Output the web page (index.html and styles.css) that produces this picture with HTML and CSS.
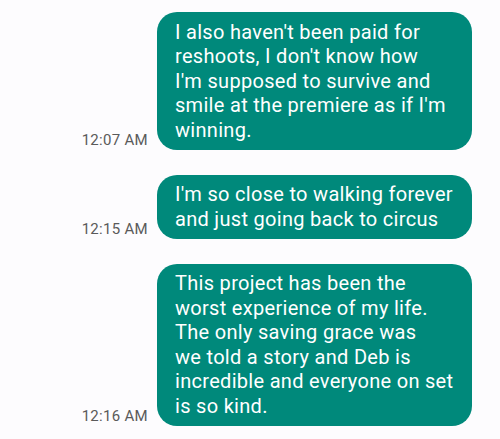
FILE: index.html
```html
<!DOCTYPE html>
<html>
<head>
<meta charset="utf-8">
<link rel="stylesheet" href="styles.css">
</head>
<body>
<div class="thread">
  <div class="row">
    <span class="time">12:07 AM</span>
    <div class="bubble">I also haven't been paid for<br>reshoots, I don't know how<br>I'm supposed to survive and<br>smile at the premiere as if I'm<br>winning.</div>
  </div>
  <div class="row">
    <span class="time">12:15 AM</span>
    <div class="bubble">I'm so close to walking forever<br>and just going back to circus</div>
  </div>
  <div class="row">
    <span class="time">12:16 AM</span>
    <div class="bubble">This project has been the<br>worst experience of my life.<br>The only saving grace was<br>we told a story and Deb is<br>incredible and everyone on set<br>is so kind.</div>
  </div>
</div>
</body>
</html>
```

FILE: styles.css
```css
html, body {
  margin: 0;
  padding: 0;
  background: #fdfcfe;
}
body {
  font-family: Roboto, "Noto Sans", sans-serif;
}
.thread {
  display: flex;
  flex-direction: column;
  gap: 25px;
  padding: 12px 28px 0 0;
}
.row {
  display: flex;
  justify-content: flex-end;
  align-items: flex-end;
  gap: 9px;
}
.time {
  font-size: 15px;
  letter-spacing: 0.3px;
  color: #5a5a5a;
  line-height: 1;
  padding-bottom: 1.5px;
}
.bubble {
  box-sizing: border-box;
  width: 315px;
  padding: 7.5px 12px 7.5px 18px;
  background: #00897b;
  color: #ffffff;
  font-size: 20px;
  letter-spacing: 0.3px;
  line-height: 24.5px;
  border-radius: 20px;
  white-space: nowrap;
}
```
